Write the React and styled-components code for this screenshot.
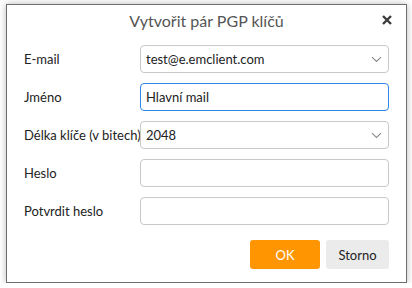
import React from "react";
import styled, { createGlobalStyle } from "styled-components";

const GlobalStyle = createGlobalStyle`
  html, body {
    margin: 0;
    padding: 0;
    background: #ffffff;
  }
  body {
    font-family: Lato, "Open Sans", sans-serif;
  }
`;

const Dialog = styled.div`
  box-sizing: border-box;
  width: 401px;
  height: 279px;
  margin: 4px 0 0 6px;
  background: #fff;
  border: 1px solid #6e6e6e;
  box-shadow: 0 0 7px rgba(0, 0, 0, 0.28);
  display: flex;
  flex-direction: column;
  padding: 0 17px 13px 17px;
`;

const TitleBar = styled.div`
  height: 40px;
  display: flex;
  align-items: center;
  justify-content: center;
  position: relative;
`;

const Title = styled.div`
  font-size: 16px;
  color: #555;
  margin-top: -9px;
`;

const Close = styled.div`
  position: absolute;
  right: -8px;
  top: 5px;
  width: 20px;
  height: 20px;
  display: flex;
  align-items: center;
  justify-content: center;
  cursor: pointer;
`;

const Form = styled.div`
  display: grid;
  grid-template-columns: 116px 1fr;
  row-gap: 10px;
  align-items: center;
`;

const Label = styled.label`
  font-size: 13px;
  color: #222;
  white-space: nowrap;
`;

const Field = styled.div`
  box-sizing: border-box;
  height: 28px;
  border: 1px solid ${p => (p.focused ? "#2f86e6" : "#c9c9c9")};
  border-radius: 4px;
  display: flex;
  align-items: center;
  justify-content: space-between;
  padding: 0 6px 0 5px;
  font-size: 13px;
  color: #222;
`;

const Footer = styled.div`
  margin-top: auto;
  display: flex;
  justify-content: flex-end;
  gap: 6px;
`;

const Button = styled.button`
  height: 29px;
  width: ${p => p.w}px;
  border: none;
  border-radius: 3px;
  background: ${p => (p.primary ? "#ff9500" : "#ebebeb")};
  color: ${p => (p.primary ? "#fff" : "#222")};
  font-family: inherit;
  font-size: 13px;
  padding: 0;
`;

const Chevron = () => (
  <svg width="11" height="7" viewBox="0 0 11 7">
    <path d="M1 1.2 L5.5 5.5 L10 1.2" fill="none" stroke="#8a8a8a" strokeWidth="1.1" />
  </svg>
);

const rows = [
  { label: "E-mail", value: "test@e.emclient.com", select: true },
  { label: "Jméno", value: "Hlavní mail", focused: true },
  { label: "Délka klíče (v bitech)", value: "2048", select: true },
  { label: "Heslo", value: "" },
  { label: "Potvrdit heslo", value: "" },
];

export default function App() {
  return (
    <>
      <GlobalStyle />
      <Dialog>
        <TitleBar>
          <Title>Vytvořit pár PGP klíčů</Title>
          <Close>
            <svg width="12" height="12" viewBox="0 0 12 12">
              <path d="M2 2 L10 10 M10 2 L2 10" stroke="#3c3c3c" strokeWidth="2.4" />
            </svg>
          </Close>
        </TitleBar>
        <Form>
          {rows.map(r => (
            <React.Fragment key={r.label}>
              <Label>{r.label}</Label>
              <Field focused={r.focused}>
                <span>{r.value}</span>
                {r.select && <Chevron />}
              </Field>
            </React.Fragment>
          ))}
        </Form>
        <Footer>
          <Button primary w={70}>OK</Button>
          <Button w={63}>Storno</Button>
        </Footer>
      </Dialog>
    </>
  );
}
